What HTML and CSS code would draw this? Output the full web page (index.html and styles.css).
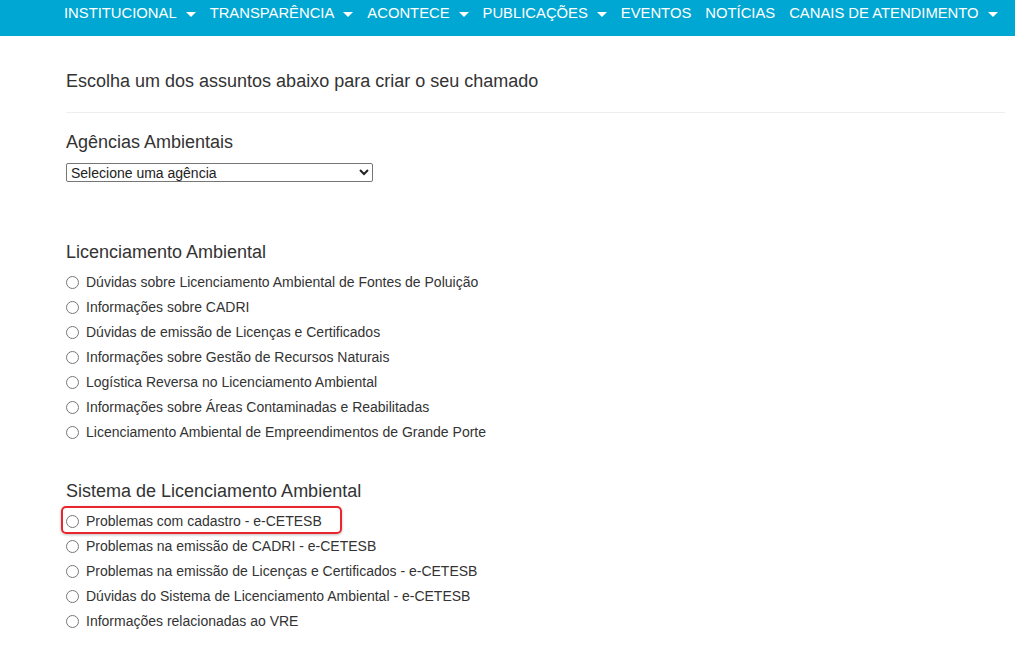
FILE: index.html
```html
<!DOCTYPE html>
<html lang="pt-BR">
<head>
    <meta charset="UTF-8">
    <meta name="viewport" content="width=device-width, initial-scale=1.0">
    <title>Escolha um assunto</title>
    <link rel="stylesheet" href="styles.css">
</head>
<body>
    <nav class="topnav">
        <a class="nav-item">INSTITUCIONAL <span class="caret"></span></a>
        <a class="nav-item">TRANSPARÊNCIA <span class="caret"></span></a>
        <a class="nav-item">ACONTECE <span class="caret"></span></a>
        <a class="nav-item">PUBLICAÇÕES <span class="caret"></span></a>
        <a class="nav-item">EVENTOS</a>
        <a class="nav-item">NOTÍCIAS</a>
        <a class="nav-item">CANAIS DE ATENDIMENTO <span class="caret"></span></a>
    </nav>

    <main class="content">
        <h2 class="intro">Escolha um dos assuntos abaixo para criar o seu chamado</h2>
        <hr class="divider">

        <section class="group">
            <h3 class="group-title">Agências Ambientais</h3>
            <select class="agency-select">
                <option>Selecione uma agência</option>
            </select>
        </section>

        <section class="group group-spaced">
            <h3 class="group-title">Licenciamento Ambiental</h3>
            <label class="option"><input type="radio" name="assunto"> Dúvidas sobre Licenciamento Ambiental de Fontes de Poluição</label>
            <label class="option"><input type="radio" name="assunto"> Informações sobre CADRI</label>
            <label class="option"><input type="radio" name="assunto"> Dúvidas de emissão de Licenças e Certificados</label>
            <label class="option"><input type="radio" name="assunto"> Informações sobre Gestão de Recursos Naturais</label>
            <label class="option"><input type="radio" name="assunto"> Logística Reversa no Licenciamento Ambiental</label>
            <label class="option"><input type="radio" name="assunto"> Informações sobre Áreas Contaminadas e Reabilitadas</label>
            <label class="option"><input type="radio" name="assunto"> Licenciamento Ambiental de Empreendimentos de Grande Porte</label>
        </section>

        <section class="group">
            <h3 class="group-title">Sistema de Licenciamento Ambiental</h3>
            <label class="option highlighted"><input type="radio" name="assunto"> Problemas com cadastro - e-CETESB</label>
            <label class="option"><input type="radio" name="assunto"> Problemas na emissão de CADRI - e-CETESB</label>
            <label class="option"><input type="radio" name="assunto"> Problemas na emissão de Licenças e Certificados - e-CETESB</label>
            <label class="option"><input type="radio" name="assunto"> Dúvidas do Sistema de Licenciamento Ambiental - e-CETESB</label>
            <label class="option"><input type="radio" name="assunto"> Informações relacionadas ao VRE</label>
        </section>
    </main>
</body>
</html>
```

FILE: styles.css
```css
body {
    font-family: "Liberation Sans", Arial, sans-serif;
    margin: 0;
    padding: 0;
    background-color: #ffffff;
    color: #333333;
}
.topnav {
    display: flex;
    align-items: flex-start;
    gap: 14px;
    height: 36px;
    padding-left: 64px;
    background-color: #00a7d3;
    white-space: nowrap;
    overflow: hidden;
}
.nav-item {
    color: #ffffff;
    font-size: 14.8px;
    line-height: 27px;
    text-decoration: none;
    display: flex;
    align-items: center;
    gap: 9px;
}
.caret {
    display: inline-block;
    width: 0;
    height: 0;
    margin-top: 2px;
    border-left: 5px solid transparent;
    border-right: 5px solid transparent;
    border-top: 5px solid #ffffff;
}
.content {
    padding: 0 10px 0 66px;
}
.intro {
    font-size: 18px;
    font-weight: normal;
    margin: 0;
    padding-top: 34px;
    line-height: 22px;
}
.divider {
    border: none;
    border-top: 1px solid #eeeeee;
    margin: 20px 0 0 0;
}
.group {
    display: flex;
    flex-direction: column;
    align-items: flex-start;
    margin-bottom: 17px;
}
.group-spaced {
    margin-top: 41px;
}
.group-title {
    font-size: 18px;
    font-weight: normal;
    margin: 18px 0 7px 0;
    line-height: 22px;
}
.agency-select {
    width: 307px;
    height: 19px;
    margin-top: 3px;
    font-family: "Liberation Sans", Arial, sans-serif;
    font-size: 14px;
    color: #222222;
    padding: 0;
    border: 1px solid #767676;
    border-radius: 2px;
    background-color: #ffffff;
}
.option {
    display: flex;
    align-items: center;
    font-size: 14px;
    line-height: 25px;
    position: relative;
}
.option input {
    margin: 0 7px 0 0;
    width: 13px;
    height: 13px;
}
.highlighted::after {
    content: "";
    position: absolute;
    left: -5px;
    top: -3px;
    width: 277px;
    height: 24px;
    border: 2px solid #e8262b;
    border-radius: 5px;
    box-shadow: 0 1px 3px rgba(0, 0, 0, 0.25);
}
```
